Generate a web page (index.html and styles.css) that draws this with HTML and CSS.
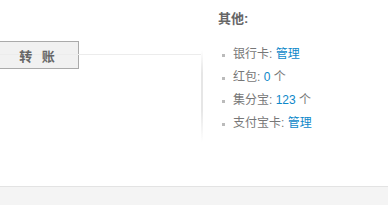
FILE: index.html
```html
<!DOCTYPE html>
<html lang="zh-CN">
<head>
    <meta charset="UTF-8">
    <title>账户</title>
    <link rel="stylesheet" href="styles.css">
</head>
<body>

<div class="page">
    <div class="main">
        <div class="actions">
            <a class="btn" href="#">转 账</a>
        </div>
        <div class="divider"></div>
    </div>
    <div class="sep"></div>
    <div class="side">
        <h3>其他:</h3>
        <ul class="side-list">
            <li>银行卡: <a href="#">管理</a></li>
            <li>红包: <a href="#">0</a> 个</li>
            <li>集分宝: <a href="#">123</a> 个</li>
            <li>支付宝卡: <a href="#">管理</a></li>
        </ul>
    </div>
</div>

<div class="footer"></div>

</body>
</html>
```

FILE: styles.css
```css
body {
    margin: 0;
    padding: 0;
    background-color: #fff;
    color: #666;
    font-family: "Liberation Sans", "Noto Sans CJK SC", sans-serif;
    font-size: 12px;
}

.page {
    display: flex;
    height: 186px;
}

.main {
    width: 201px;
}

.actions {
    padding-top: 41px;
    height: 54px;
    box-sizing: border-box;
}

.btn {
    display: flex;
    align-items: center;
    justify-content: center;
    margin-left: -2px;
    width: 81px;
    height: 28px;
    box-sizing: border-box;
    border: 1px solid #aaa;
    background-color: #f1f1f1;
    color: #666;
    font-weight: bold;
    font-size: 13px;
    letter-spacing: 3px;
    text-decoration: none;
}

.divider {
    height: 1px;
    background-color: #ececec;
}

.sep {
    width: 2px;
    margin-top: 50px;
    height: 92px;
    background: linear-gradient(to bottom, rgba(229, 229, 229, 0), #e6e6e6 25%, #e6e6e6 65%, rgba(229, 229, 229, 0));
}

.side {
    padding-left: 15px;
}

.side h3 {
    margin: 10px 0 0 0;
    font-size: 13px;
    line-height: 17px;
    font-weight: bold;
    color: #666;
}

.side-list {
    list-style: none;
    margin: 16px 0 0 0;
    padding: 0 0 0 4px;
}

.side-list li {
    position: relative;
    padding-left: 11px;
    line-height: 23px;
    color: #777;
}

.side-list li::before {
    content: "";
    position: absolute;
    left: 0;
    top: 11px;
    width: 3px;
    height: 3px;
    background-color: #bbb;
}

.side-list a {
    color: #0e88c9;
    text-decoration: none;
}

.footer {
    height: 19px;
    border-top: 1px solid #e3e3e3;
    background-color: #f4f4f4;
}
```
